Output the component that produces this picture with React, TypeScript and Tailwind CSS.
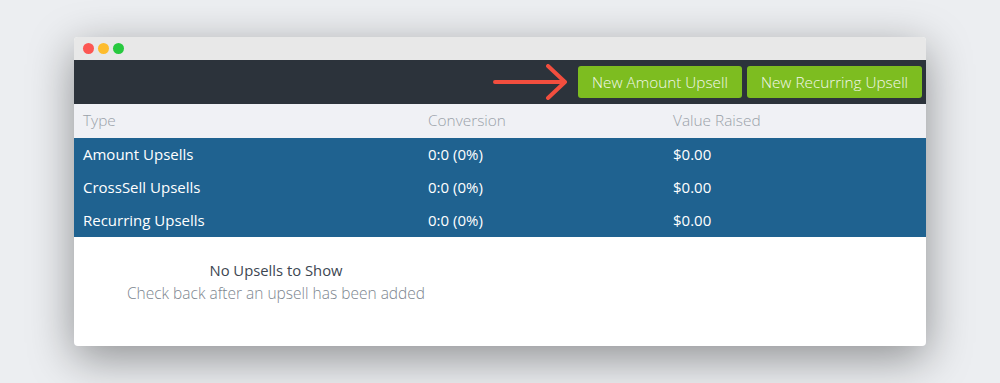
import React from "react";

const rows = [
  { type: "Amount Upsells", conv: "0:0 (0%)", value: "$0.00" },
  { type: "CrossSell Upsells", conv: "0:0 (0%)", value: "$0.00" },
  { type: "Recurring Upsells", conv: "0:0 (0%)", value: "$0.00" },
];

export default function App() {
  return (
    <div
      className="w-[1000px] h-[383px] bg-[#eceef1] pt-[37px] pl-[74px]"
      style={{ fontFamily: '"Open Sans", "Liberation Sans", sans-serif' }}
    >
      <div className="w-[852px] h-[309px] rounded-[4px] overflow-hidden bg-white shadow-[0_12px_45px_rgba(0,0,0,0.4)] flex flex-col">
        <div className="h-[23px] bg-[#e8e8e8] flex items-center gap-[4px] pl-[9px]">
          <span className="w-[11px] h-[11px] rounded-full bg-[#fc5753]" />
          <span className="w-[11px] h-[11px] rounded-full bg-[#fdbc2e]" />
          <span className="w-[11px] h-[11px] rounded-full bg-[#27c93f]" />
        </div>
        <div className="h-[44px] bg-[#2c333b] flex items-center justify-end pr-[4px] gap-[5px]">
          <svg width="76" height="36" viewBox="0 0 76 36" className="mr-[4px]">
            <path
              d="M2 18 H72 M55 2 L72 18 L55 34"
              fill="none"
              stroke="#f24e3e"
              strokeWidth="4"
              strokeLinecap="round"
              strokeLinejoin="round"
            />
          </svg>
          <button className="h-[32px] w-[164px] rounded-[3px] bg-[#7dbd20] text-[#f2f7ea] text-[15.3px] font-light">
            New Amount Upsell
          </button>
          <button className="h-[32px] w-[175px] rounded-[3px] bg-[#7dbd20] text-[#f2f7ea] text-[15.3px] font-light">
            New Recurring Upsell
          </button>
        </div>
        <div className="h-[34px] bg-[#f0f1f5] flex items-center text-[15.4px] font-light text-[#9aa1a9]">
          <div className="w-[354px] pl-[9px]">Type</div>
          <div className="w-[245px]">Conversion</div>
          <div>Value Raised</div>
        </div>
        {rows.map((r) => (
          <div
            key={r.type}
            className="h-[33px] bg-[#1f6290] flex items-center text-[15px] text-white"
          >
            <div className="w-[354px] pl-[9px]">{r.type}</div>
            <div className="w-[245px]">{r.conv}</div>
            <div>{r.value}</div>
          </div>
        ))}
        <div className="w-[404px] pt-[22px] text-center leading-[23px]">
          <div className="text-[#3d4651] text-[14.8px]">No Upsells to Show</div>
          <div className="text-[#7d868f] font-light text-[15.5px]">
            Check back after an upsell has been added
          </div>
        </div>
      </div>
    </div>
  );
}
